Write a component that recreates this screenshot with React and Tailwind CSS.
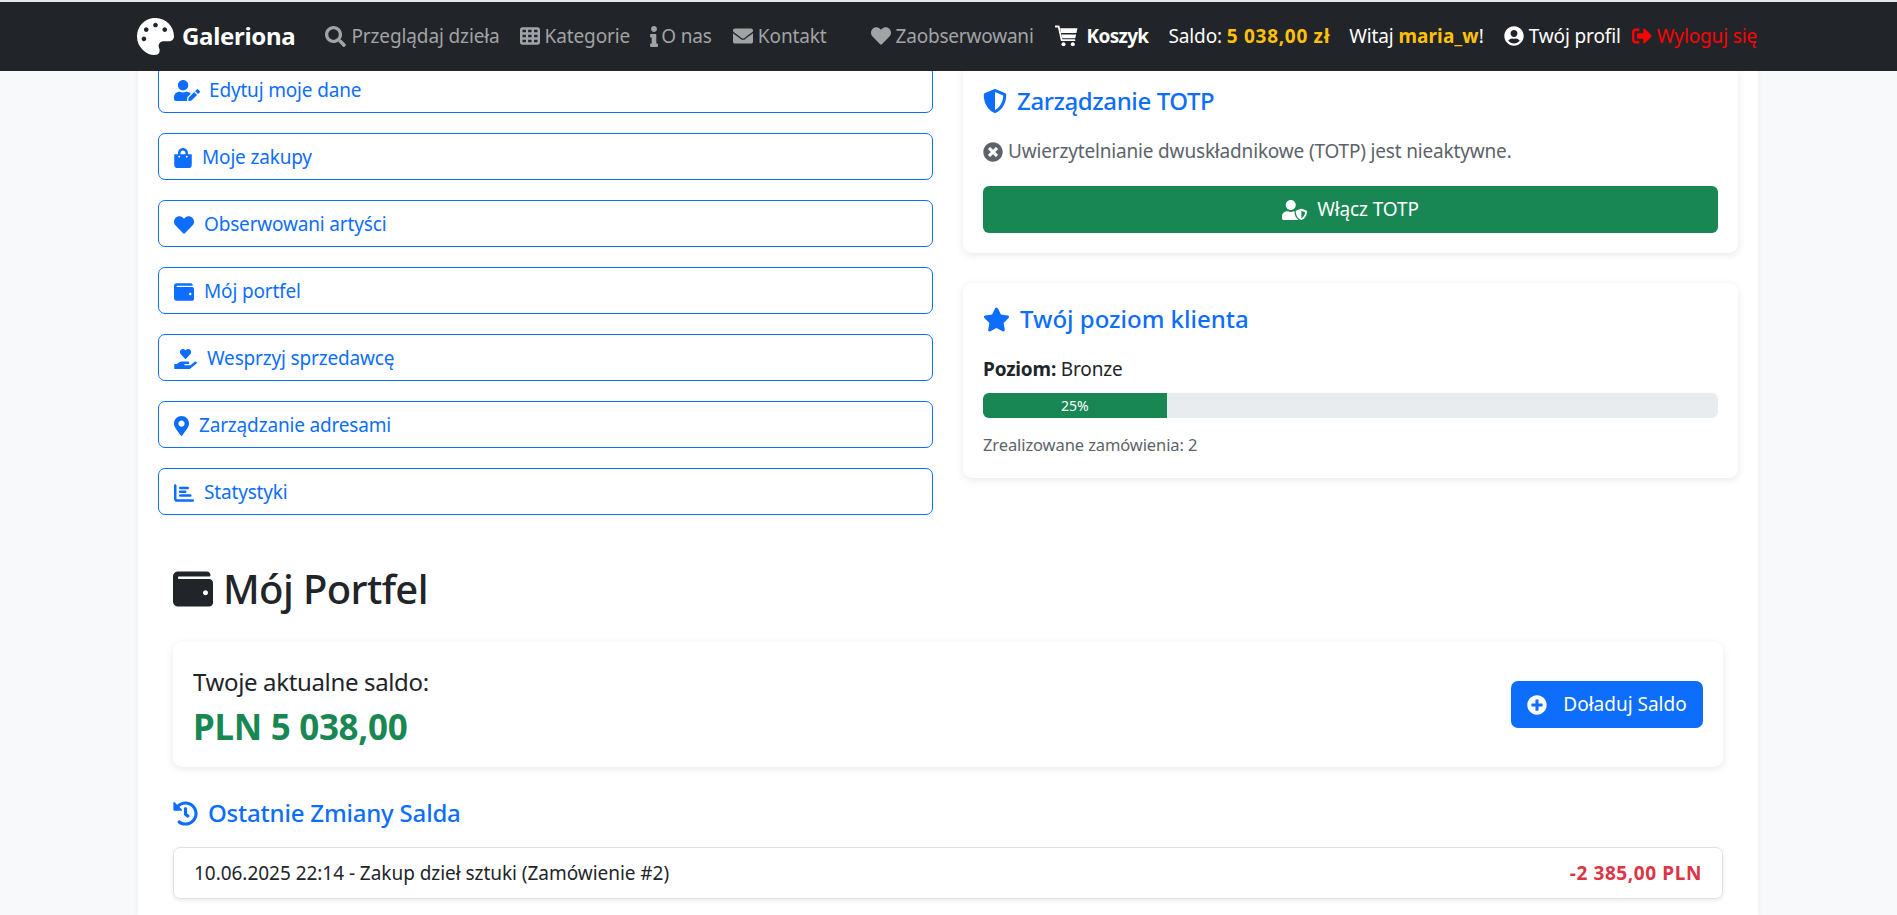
import {
  FaPalette, FaSearch, FaInfo, FaEnvelope, FaHeart, FaUserCircle, FaSignOutAlt,
  FaUserEdit, FaShoppingBag, FaWallet, FaHandHoldingHeart, FaMapMarkerAlt, FaShieldAlt,
  FaTimesCircle, FaUserShield, FaStar, FaHistory, FaPlusCircle,
} from 'react-icons/fa';
import { FaChartBar, FaTableCells } from 'react-icons/fa6';

const profileLinks = [
  { label: 'Edytuj moje dane', icon: FaUserEdit, iconClass: 'w-[26px] h-[21px]', gap: 'mr-[9px]' },
  { label: 'Moje zakupy', icon: FaShoppingBag, iconClass: 'w-[18px] h-[20px]', gap: 'mr-[10px]' },
  { label: 'Obserwowani artyści', icon: FaHeart, iconClass: 'w-[20px] h-[20px]', gap: 'mr-[10px]' },
  { label: 'Mój portfel', icon: FaWallet, iconClass: 'w-[20px] h-[20px]', gap: 'mr-[10px]' },
  { label: 'Wesprzyj sprzedawcę', icon: FaHandHoldingHeart, iconClass: 'w-[23px] h-[20px]', gap: 'mr-[10px]' },
  { label: 'Zarządzanie adresami', icon: FaMapMarkerAlt, iconClass: 'w-[15px] h-[20px]', gap: 'mr-[10px]' },
  { label: 'Statystyki', icon: FaChartBar, iconClass: 'w-[20px] h-[20px]', gap: 'mr-[10px]' },
];

function CartIcon() {
  return (
    <svg viewBox="0.5 1.5 23 21" fill="currentColor" className="mr-[9px] h-[22px] w-[23px] shrink-0">
      <path d="M1 2.5h3.2l3 13.7H20" fill="none" stroke="currentColor" strokeWidth="1.8" strokeLinecap="round" strokeLinejoin="round" />
      <path d="M5.7 4.3H23L21.9 9H6.7z" />
      <path d="M7.1 10.4h14.5l-.9 3.8H7.9z" />
      <circle cx="9" cy="20.2" r="2" />
      <circle cx="18.3" cy="20.2" r="2" />
    </svg>
  );
}

function NavItem({ icon: Icon, label, iconClass, className = '' }) {
  return (
    <a className={`flex items-center ${className}`}>
      <Icon className={`shrink-0 ${iconClass}`} />
      {label}
    </a>
  );
}

function Navbar() {
  return (
    <header className="relative z-10 h-[71px] shrink-0 border-t-2 border-[#e4e5e6] bg-[#212529] text-[19px] tracking-[-0.12px]">
      <nav className="flex h-full items-center whitespace-nowrap pb-[1px] pl-[137px]">
        <a className="mr-[30px] flex items-center text-[24px] font-bold tracking-[-0.3px] text-white">
          <FaPalette className="mr-[8px] h-[37px] w-[37px]" />
          Galeriona
        </a>
        <div className="flex items-center gap-[20px] text-[#a2a3a5]">
          <NavItem icon={FaSearch} label="Przeglądaj dzieła" iconClass="mr-[5px] h-[21px] w-[21px]" />
          <NavItem icon={FaTableCells} label="Kategorie" iconClass="mr-[5px] h-[20px] w-[20px]" />
          <NavItem icon={FaInfo} label="O nas" iconClass="mr-[3px] h-[21px] w-[8px]" />
          <NavItem icon={FaEnvelope} label="Kontakt" iconClass="mr-[5px] h-[20px] w-[20px]" className="ml-[1px]" />
        </div>
        <div className="ml-[44px] flex items-center">
          <NavItem icon={FaHeart} label="Zaobserwowani" iconClass="mr-[5px] h-[20px] w-[20px]" className="mr-[21px] tracking-[-0.2px] text-[#a2a3a5]" />
          <a className="mr-[20px] flex items-center font-bold tracking-[-0.7px] text-white">
            <CartIcon />
            Koszyk
          </a>
          <span className="mr-[19px] text-white">
            Saldo: <b className="font-bold tracking-[0.7px] text-[#ffc107]">5 038,00 zł</b>
          </span>
          <span className="mr-[20px] text-white">
            Witaj <b className="font-bold tracking-[0.1px] text-[#ffc107]">maria_w</b>!
          </span>
          <NavItem icon={FaUserCircle} label="Twój profil" iconClass="mr-[5px] h-[20px] w-[20px]" className="mr-[11px] text-white" />
          <NavItem icon={FaSignOutAlt} label="Wyloguj się" iconClass="mr-[5px] h-[20px] w-[20px]" className="text-[#ff0000]" />
        </div>
      </nav>
    </header>
  );
}

function Card({ className = '', children }) {
  return <div className={`rounded-[9px] bg-white shadow-[0_2px_8px_rgba(0,0,0,0.09)] ${className}`}>{children}</div>;
}

function App() {
  return (
    <div className="flex h-[915px] flex-col overflow-hidden bg-[#f8f9fa] font-['Noto_Sans',sans-serif] text-[#212529]">
      <Navbar />
      <main className="-mt-[5px] ml-[138px] h-[849px] w-[1620px] bg-white px-[20px] shadow-[0_0_6px_rgba(0,0,0,0.06)]">
        <div className="flex gap-[30px]">
          <div className="flex w-[775px] flex-col gap-[20px]">
            {profileLinks.map((link) => {
              const Icon = link.icon;
              return (
                <a
                  key={link.label}
                  className="flex h-[47px] items-center rounded-[7px] border border-[#0d6efd] pl-[15px] pt-[2px] text-[19px] tracking-[-0.17px] text-[#0d6efd]"
                >
                  <Icon className={`${link.iconClass} ${link.gap} shrink-0`} />
                  <span>{link.label}</span>
                </a>
              );
            })}
          </div>

          <div className="w-[775px]">
            <Card className="h-[187px] px-[20px] pt-[14px]">
              <h5 className="flex h-[41px] items-center text-[24px] font-medium tracking-[-0.4px] text-[#0d6efd]">
                <FaShieldAlt className="mr-[10px] h-[24px] w-[24px]" />
                Zarządzanie TOTP
              </h5>
              <p className="mt-[17px] flex items-center text-[19px] leading-[27px] tracking-[-0.17px] text-[#5c636a]">
                <FaTimesCircle className="mr-[5px] h-[20px] w-[20px]" />
                Uwierzytelnianie dwuskładnikowe (TOTP) jest nieaktywne.
              </p>
              <button className="mt-[21px] flex h-[47px] w-full items-center justify-center rounded-[6px] bg-[#198754] text-[19px] tracking-[-0.1px] text-white">
                <FaUserShield className="mr-[10px] h-[20px] w-[25px]" />
                Włącz TOTP
              </button>
            </Card>

            <Card className="mt-[30px] h-[195px] px-[20px] pt-[16px]">
              <h5 className="flex h-[40px] items-center text-[24px] font-medium text-[#0d6efd]">
                <FaStar className="mr-[10px] h-[25px] w-[27px]" />
                Twój poziom klienta
              </h5>
              <p className="mt-[16px] text-[19px] leading-[28px] tracking-[-0.17px]">
                <b className="font-bold">Poziom:</b> Bronze
              </p>
              <div className="mt-[10px] flex h-[25px] overflow-hidden rounded-[6px] bg-[#e9ecef]">
                <div className="flex w-1/4 items-center justify-center bg-[#198754] text-[14px] text-white">25%</div>
              </div>
              <p className="mt-[15px] text-[16.5px] leading-[24px] tracking-[-0.1px] text-[#5c636a]">Zrealizowane zamówienia: 2</p>
            </Card>
          </div>
        </div>

        <h1 className="ml-[15px] mt-[50px] flex h-[48px] items-center text-[40px] font-medium tracking-[-0.6px]">
          <FaWallet className="mr-[10px] h-[40px] w-[40px]" />
          Mój Portfel
        </h1>

        <Card className="mx-[15px] mt-[29px] flex h-[125px] items-center justify-between px-[20px]">
          <div className="pt-[7px]">
            <p className="text-[24px] leading-[34px] tracking-[-0.35px]">Twoje aktualne saldo:</p>
            <p className="mt-[4px] text-[35px] font-bold leading-[48px] tracking-[-0.3px] text-[#198754]">PLN 5 038,00</p>
          </div>
          <button className="flex h-[47px] w-[192px] items-center justify-center rounded-[7px] bg-[#0d6efd] text-[19px] text-white">
            <FaPlusCircle className="mr-[16px] h-[20px] w-[20px]" />
            Doładuj Saldo
          </button>
        </Card>

        <h4 className="ml-[15px] mt-[30px] flex h-[32px] items-center text-[24px] font-medium tracking-[-0.2px] text-[#0d6efd]">
          <FaHistory className="mr-[10px] h-[25px] w-[25px]" />
          Ostatnie Zmiany Salda
        </h4>

        <div className="mx-[15px] mt-[18px] flex h-[52px] items-center justify-between rounded-[7px] border border-[#dee2e6] px-[20px] text-[19px] tracking-[-0.04px] shadow-[0_2px_5px_rgba(0,0,0,0.08)]">
          <span>10.06.2025 22:14 - Zakup dzieł sztuki (Zamówienie #2)</span>
          <b className="font-bold tracking-[0.6px] text-[#dc3545]">-2 385,00 PLN</b>
        </div>
      </main>
    </div>
  );
}

export default App;
